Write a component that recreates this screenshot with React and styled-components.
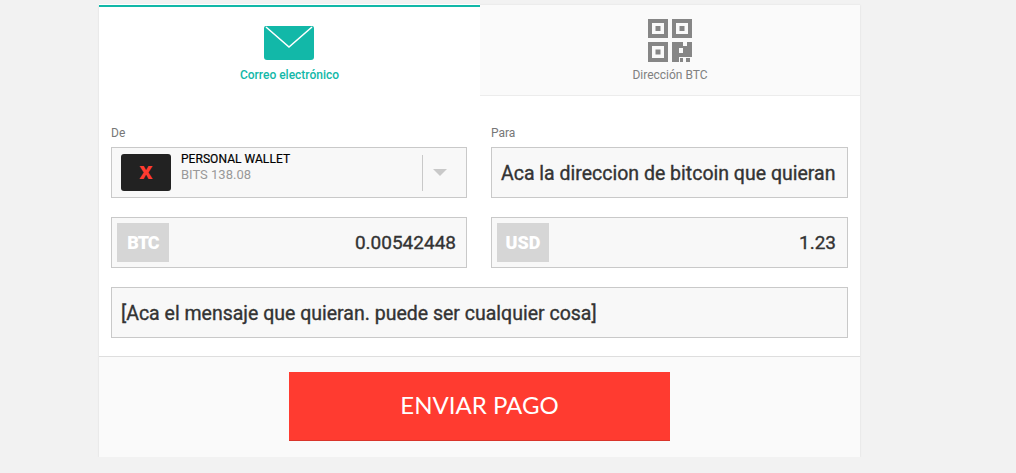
import React from 'react';
import styled, { createGlobalStyle } from 'styled-components';

const GlobalStyle = createGlobalStyle`
  html, body {
    margin: 0;
    padding: 0;
    background: #f2f2f2;
    font-family: Roboto, 'Liberation Sans', sans-serif;
  }
  * {
    box-sizing: border-box;
  }
`;

const Card = styled.div`
  width: 761px;
  height: 453px;
  margin: 4px 0 0 99px;
  background: #fff;
  display: flex;
  flex-direction: column;
  box-shadow: 0 1px 2px rgba(0, 0, 0, 0.1);
`;

const Tabs = styled.div`
  display: grid;
  grid-template-columns: 381px 380px;
  height: 92px;
`;

const Tab = styled.div`
  display: flex;
  flex-direction: column;
  align-items: center;
  height: ${(p) => (p.$active ? '91px' : '92px')};
  margin-top: ${(p) => (p.$active ? '1px' : '0')};
  background: ${(p) => (p.$active ? '#fff' : '#fafafa')};
  border-top: ${(p) => (p.$active ? '2px solid #12b8a8' : '1px solid #ececec')};
  border-bottom: ${(p) => (p.$active ? 'none' : '1px solid #ececec')};
  padding-top: ${(p) => (p.$active ? '19px' : '14px')};
  color: ${(p) => (p.$active ? '#12b8a8' : '#808080')};
`;

const TabLabel = styled.span`
  font-size: 12px;
  line-height: 14px;
  font-weight: ${(p) => (p.$active ? 500 : 400)};
  margin-top: ${(p) => (p.$active ? '8px' : '6px')};
`;

const Form = styled.div`
  display: grid;
  grid-template-columns: 356px 357px;
  column-gap: 24px;
  row-gap: 19px;
  padding: 29px 12px 18px;
  height: 260px;
  align-content: start;
`;

const Field = styled.div`
  display: flex;
  flex-direction: column;
  gap: 6px;
  grid-column: ${(p) => (p.$wide ? '1 / -1' : 'auto')};
`;

const Label = styled.label`
  font-size: 12px;
  line-height: 16px;
  color: #777;
`;

const Box = styled.div`
  height: 51px;
  display: flex;
  align-items: center;
  background: #f8f8f8;
  border: 1px solid #c9c9c9;
  color: #333;
  font-size: 19.5px;
  font-weight: 400;
  -webkit-text-stroke: 0.35px #333;
  padding: ${(p) => p.$pad || '0 9px'};
  white-space: nowrap;
  overflow: hidden;
`;

const BoxText = styled.span`
  padding-top: 2px;
`;

const Logo = styled.div`
  width: 50px;
  height: 37px;
  flex: none;
  background: #222;
  border-radius: 3px;
  display: flex;
  align-items: center;
  justify-content: center;
  span {
    color: #ff3b30;
    font-size: 18px;
    font-weight: 900;
    -webkit-text-stroke: 0;
    transform: scaleX(1.15);
  }
`;

const WalletInfo = styled.div`
  display: flex;
  flex-direction: column;
  margin: 0 0 11px 10px;
  flex: 1;
  -webkit-text-stroke: 0;
`;

const WalletName = styled.span`
  font-size: 12px;
  line-height: 16px;
  font-weight: 400;
  color: #000;
  letter-spacing: 0.05px;
  -webkit-text-stroke: 0.2px #000;
`;

const WalletBits = styled.span`
  font-size: 13px;
  line-height: 16px;
  font-weight: 400;
  color: #999;
`;

const Caret = styled.div`
  width: 35px;
  height: 36px;
  flex: none;
  border-left: 1px solid #c9c9c9;
  display: flex;
  align-items: center;
  justify-content: center;
  &::after {
    content: '';
    border-left: 7px solid transparent;
    border-right: 7px solid transparent;
    border-top: 7px solid #c9c9c9;
  }
`;

const Badge = styled.div`
  width: 52px;
  height: 39px;
  flex: none;
  background: #d6d6d6;
  color: #fff;
  display: flex;
  align-items: center;
  justify-content: center;
  font-size: 18px;
  font-weight: 900;
  -webkit-text-stroke: 0;
  letter-spacing: ${(p) => p.$spacing || '0'};
`;

const Amount = styled.span`
  margin-left: auto;
  font-size: 19px;
`;

const Footer = styled.div`
  flex: 1;
  background: #fafafa;
  border-top: 1px solid #dedede;
  display: flex;
  justify-content: center;
  padding-top: 15px;
`;

const PayButton = styled.button`
  width: 381px;
  height: 69px;
  border: none;
  border-bottom: 1px solid #d9352b;
  background: #ff3b30;
  color: #fff;
  font-family: Lato, 'Liberation Sans', sans-serif;
  font-size: 24px;
  font-weight: 400;
  padding: 0 0 4px;
`;

const MailSvg = styled.svg`
  margin-left: -1px;
`;

const MailIcon = () => (
  <MailSvg width="50" height="34" viewBox="0 0 50 34">
    <path
      d="M2 0h46a2 2 0 0 1 2 2v29a3 3 0 0 1-3 3H3a3 3 0 0 1-3-3V2a2 2 0 0 1 2-2z"
      fill="#12b8a8"
    />
    <path d="M2 1l23 20L48 1" fill="none" stroke="#fff" strokeWidth="1.6" />
  </MailSvg>
);

const QrIcon = () => (
  <svg width="44" height="43" viewBox="0 0 44 43" fill="#868686">
    <path fillRule="evenodd" d="M0 0h20v19H0zM4 4v11h12V4zM7.500 7h5v5h-5z" />
    <path fillRule="evenodd" d="M24 0h20v19H24zM28 4v11h12V4zM31.500 7h5v5h-5z" />
    <path fillRule="evenodd" d="M0 23h20v20H0zM4 27v12h12V27zM7.500 30.500h5v5h-5z" />
    <path
      fillRule="evenodd"
      d="M24 23h11v4h4v-4h5v15H31v5h-7zM31 29v5h4v-5z"
    />
    <path d="M32 39h3v4h-3zM38 39h4v4h-4z" />
  </svg>
);

const App = () => (
  <>
    <GlobalStyle />
    <Card>
      <Tabs>
        <Tab $active>
          <MailIcon />
          <TabLabel $active>Correo electrónico</TabLabel>
        </Tab>
        <Tab>
          <QrIcon />
          <TabLabel>Dirección BTC</TabLabel>
        </Tab>
      </Tabs>
      <Form>
        <Field>
          <Label>De</Label>
          <Box>
            <Logo>
              <span>X</span>
            </Logo>
            <WalletInfo>
              <WalletName>PERSONAL WALLET</WalletName>
              <WalletBits>BITS 138.08</WalletBits>
            </WalletInfo>
            <Caret />
          </Box>
        </Field>
        <Field>
          <Label>Para</Label>
          <Box>
            <BoxText>Aca la direccion de bitcoin que quieran</BoxText>
          </Box>
        </Field>
        <Box $pad="0 10px 0 5px">
          <Badge $spacing="-1px">BTC</Badge>
          <Amount>0.00542448</Amount>
        </Box>
        <Box $pad="0 11px 0 5px">
          <Badge>USD</Badge>
          <Amount>1.23</Amount>
        </Box>
        <Field $wide>
          <Box>
            <BoxText>[Aca el mensaje que quieran. puede ser cualquier cosa]</BoxText>
          </Box>
        </Field>
      </Form>
      <Footer>
        <PayButton>ENVIAR PAGO</PayButton>
      </Footer>
    </Card>
  </>
);

export default App;
